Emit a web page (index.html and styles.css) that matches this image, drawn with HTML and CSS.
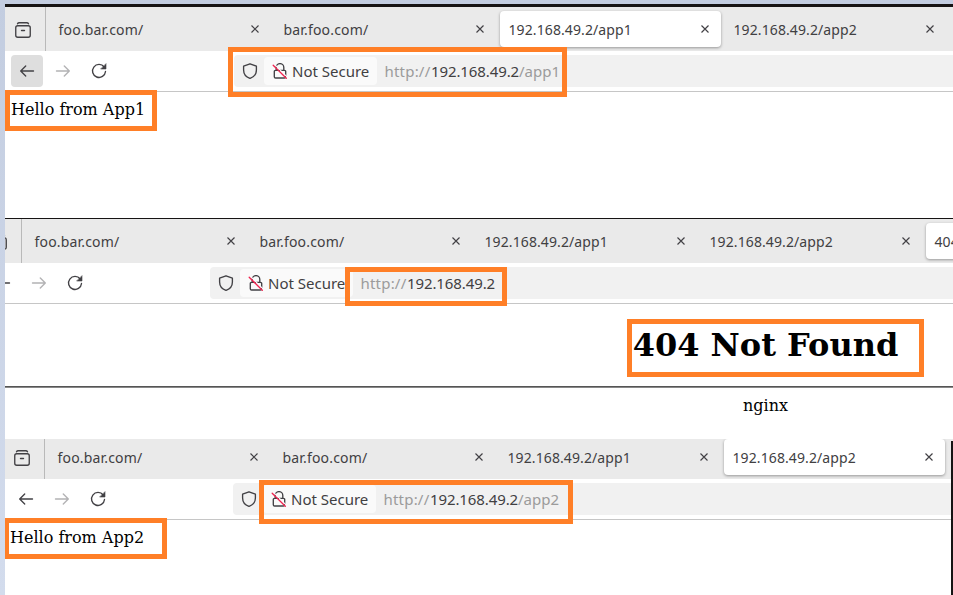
FILE: index.html
```html
<!DOCTYPE html>
<html lang="en">
<head>
<meta charset="utf-8">
<title>Ingress routes</title>
<link rel="stylesheet" href="styles.css">
</head>
<body>
<svg class="defs" aria-hidden="true">
  <symbol id="archive" viewBox="0 0 16 16"><path d="M2.500 1.800Q3 .7 4.200.7h7.600Q13 .7 13.500 1.800"/><rect x=".75" y="3.75" width="14.500" height="11.500" rx="2"/><path d="M6.500 8.500h3"/></symbol>
  <symbol id="back" viewBox="0 0 16 16"><path d="M14.500 8H1.800M6.700 3 1.700 8l5 5"/></symbol>
  <symbol id="forward" viewBox="0 0 16 16"><path d="M1.500 8h12.700M9.300 3l5 5-5 5"/></symbol>
  <symbol id="reload" viewBox="0 0 16 16"><path d="M13.200 4A6.500 6.500 0 1 0 14.500 8.500"/><path class="solid" d="M15 1v5h-5z"/></symbol>
  <symbol id="shield" viewBox="0 0 16 16"><path d="M8 .8 14.400 3.200V7c0 4-3 7.200-6.400 8.400C4.600 14.200 1.600 11 1.600 7V3.200z"/></symbol>
  <symbol id="lock" viewBox="0 0 16 16"><path d="M4.200 7V4.400a3.800 3.800 0 0 1 7.600 0V7M3.500 7.300h9a1.200 1.200 0 0 1 1.200 1.200v5.200a1.300 1.300 0 0 1-1.300 1.300H3.600a1.300 1.300 0 0 1-1.300-1.300V8.500a1.200 1.200 0 0 1 1.200-1.200z"/><path class="gap" d="M2.500 1.300 15.500 14.300"/><path class="strike" d="M1.200 2.200 14.300 15.300"/></symbol>
  <symbol id="close" viewBox="0 0 8 8"><path d="M.5.5l7 7M7.500.5l-7 7"/></symbol>
</svg>

<main class="stack">
  <section class="window first">
    <div class="chrome">
      <div class="tabs">
        <div class="side"><svg><use href="#archive"/></svg></div>
        <div class="tab"><span class="domain">foo.bar.com/</span><svg><use href="#close"/></svg></div>
        <div class="tab"><span class="domain">bar.foo.com/</span><svg><use href="#close"/></svg></div>
        <div class="tab active"><span>192.168.49.2/app1</span><svg><use href="#close"/></svg></div>
        <div class="tab"><span>192.168.49.2/app2</span><svg><use href="#close"/></svg></div>
      </div>
      <div class="toolbar">
        <div class="btn pressed"><svg><use href="#back"/></svg></div>
        <div class="btn off"><svg><use href="#forward"/></svg></div>
        <div class="btn"><svg><use href="#reload"/></svg></div>
        <div class="url"><svg><use href="#shield"/></svg><div class="pill"><svg><use href="#lock"/></svg><span>Not Secure</span></div><p class="address"><span class="scheme">http://</span><span class="host">192.168.49.2</span><span class="path">/app1</span></p></div>
      </div>
    </div>
    <p class="hello">Hello from App1</p>
  </section>

  <section class="window second">
    <div class="chrome">
      <div class="tabs">
        <div class="side"><svg><use href="#archive"/></svg></div>
        <div class="tab"><span class="domain">foo.bar.com/</span><svg><use href="#close"/></svg></div>
        <div class="tab"><span class="domain">bar.foo.com/</span><svg><use href="#close"/></svg></div>
        <div class="tab"><span>192.168.49.2/app1</span><svg><use href="#close"/></svg></div>
        <div class="tab"><span>192.168.49.2/app2</span><svg><use href="#close"/></svg></div>
        <div class="tab active"><span>404</span></div>
      </div>
      <div class="toolbar">
        <div class="btn"><svg><use href="#back"/></svg></div>
        <div class="btn off"><svg><use href="#forward"/></svg></div>
        <div class="btn"><svg><use href="#reload"/></svg></div>
        <div class="url"><svg><use href="#shield"/></svg><div class="pill"><svg><use href="#lock"/></svg><span>Not Secure</span></div><p class="address"><span class="scheme">http://</span><span class="host">192.168.49.2</span></p></div>
      </div>
    </div>
    <div class="error">
      <h1>404 Not Found</h1>
      <hr>
      <p>nginx</p>
    </div>
  </section>

  <section class="window third">
    <div class="chrome">
      <div class="tabs">
        <div class="side"><svg><use href="#archive"/></svg></div>
        <div class="tab"><span class="domain">foo.bar.com/</span><svg><use href="#close"/></svg></div>
        <div class="tab"><span class="domain">bar.foo.com/</span><svg><use href="#close"/></svg></div>
        <div class="tab"><span>192.168.49.2/app1</span><svg><use href="#close"/></svg></div>
        <div class="tab active"><span>192.168.49.2/app2</span><svg><use href="#close"/></svg></div>
      </div>
      <div class="toolbar">
        <div class="btn"><svg><use href="#back"/></svg></div>
        <div class="btn off"><svg><use href="#forward"/></svg></div>
        <div class="btn"><svg><use href="#reload"/></svg></div>
        <div class="url"><svg><use href="#shield"/></svg><div class="pill"><svg><use href="#lock"/></svg><span>Not Secure</span></div><p class="address"><span class="scheme">http://</span><span class="host">192.168.49.2</span><span class="path">/app2</span></p></div>
      </div>
    </div>
    <p class="hello">Hello from App2</p>
    <i class="edge"></i>
  </section>
</main>

<i class="mark url1"></i>
<i class="mark page1"></i>
<i class="mark url2"></i>
<i class="mark page2"></i>
<i class="mark url3"></i>
<i class="mark page3"></i>
</body>
</html>
```
FILE: styles.css
```css
* { box-sizing: border-box; }
html, body { height: 100%; }
body {
  margin: 0;
  padding: 4px 0 0 5px;
  position: relative;
  overflow: hidden;
  background: linear-gradient(#c3cde0, #d3dced);
  font-family: "Noto Sans", sans-serif;
  color: #414042;
}
p, h1 { margin: 0; }
.defs { position: absolute; width: 0; height: 0; }
svg {
  flex: none;
  width: 16px;
  height: 16px;
  fill: none;
  stroke: #424145;
  stroke-width: 1.35;
  stroke-linecap: round;
  stroke-linejoin: round;
}
.solid { fill: #424145; stroke-width: .6; }
.gap { stroke: #fafafa; stroke-width: 1.2; }
.strike { stroke: #f0234f; stroke-width: 1.3; }

.stack { height: 591px; display: flex; flex-direction: column; }
.window { position: relative; overflow: hidden; background: #fff; flex: none; }
.first { height: 214px; border-top: 3px solid #161414; --shift: 0px; }
.second { height: 221px; border-top: 1px solid #161414; --shift: -24px; }
.third { height: 156px; --shift: -1px; }
.third .chrome { margin-top: -4px; }

.tabs { height: 44px; display: flex; background: #eaeaea; }
.side {
  flex: none;
  width: 41px;
  margin: 0 2px 0 var(--shift);
  padding: 14px 0 0 10px;
  border-right: 1px solid #b9b9b9;
}
.tab {
  flex: none;
  width: 221px;
  height: 36px;
  margin: 4px 2px;
  padding: 0 12px 0 8.5px;
  display: flex;
  align-items: center;
  justify-content: space-between;
  border-radius: 4px;
  font-size: 14px;
  letter-spacing: .1px;
  line-height: 20px;
}
.tab span { padding-top: 1px; }
.tab .domain { letter-spacing: .17px; }
.tab svg { width: 8px; height: 8px; margin-top: -1px; stroke-width: 1.150; stroke-linecap: butt; }
.active { background: #fff; box-shadow: 0 1px 3px rgba(0, 0, 0, .36); }

.toolbar {
  height: 41px;
  padding: 4px 0 4px 6px;
  display: flex;
  gap: 4px;
  border-bottom: 1px solid #c6c6c6;
}
.btn {
  flex: none;
  width: 32px;
  height: 32px;
  border-radius: 4px;
  display: grid;
  place-items: center;
}
.btn:first-child { margin-left: var(--shift); }
.pressed { background: #dedede; }
.off { opacity: .4; }
.url {
  flex: none;
  width: 760px;
  height: 32px;
  margin-left: 115px;
  padding-left: 8px;
  display: flex;
  align-items: center;
  border-radius: 4px;
  background: #f1f1f1;
  font-size: 15px;
  line-height: 20px;
  white-space: nowrap;
}
.pill {
  flex: none;
  width: 113px;
  height: 28px;
  margin-left: 6px;
  padding-left: 8px;
  display: flex;
  align-items: center;
  gap: 4px;
  border-radius: 4px;
  background: #fafafa;
}
.address { margin-left: 7.5px; display: flex; }
.scheme { width: 46.5px; letter-spacing: .2px; }
.host { width: 88px; letter-spacing: -.1px; }
.scheme, .path { color: #9b9b9b; }

.hello, .error { font-family: "DejaVu Serif", serif; font-size: 16px; line-height: 19px; color: #000; }
.hello { padding: 8px 0 0 6px; }
.third .hello { padding-left: 5px; }
.error { width: 1521px; text-align: center; padding-top: 22px; }
.error h1 { font-size: 32px; line-height: 38px; font-weight: 700; }
.error hr { height: 2px; margin: 22px 0 8px; border: 0; border-top: 1px solid #555; background: #888; }
.edge { position: absolute; right: 0; top: 2px; bottom: 0; width: 2px; background: #161414; }

/* Highlight frames over the windows */
.mark { position: absolute; border: 5px solid #ff7f27; }
.url1 { left: 228px; top: 47px; width: 339px; height: 50px; }
.page1 { left: 5px; top: 90px; width: 152px; height: 41px; }
.url2 { left: 345px; top: 267px; width: 162px; height: 39px; }
.page2 { left: 627px; top: 319px; width: 297px; height: 58px; }
.url3 { left: 259px; top: 480px; width: 314px; height: 44px; }
.page3 { left: 5px; top: 518px; width: 162px; height: 41px; border-left-width: 4px; }
```
